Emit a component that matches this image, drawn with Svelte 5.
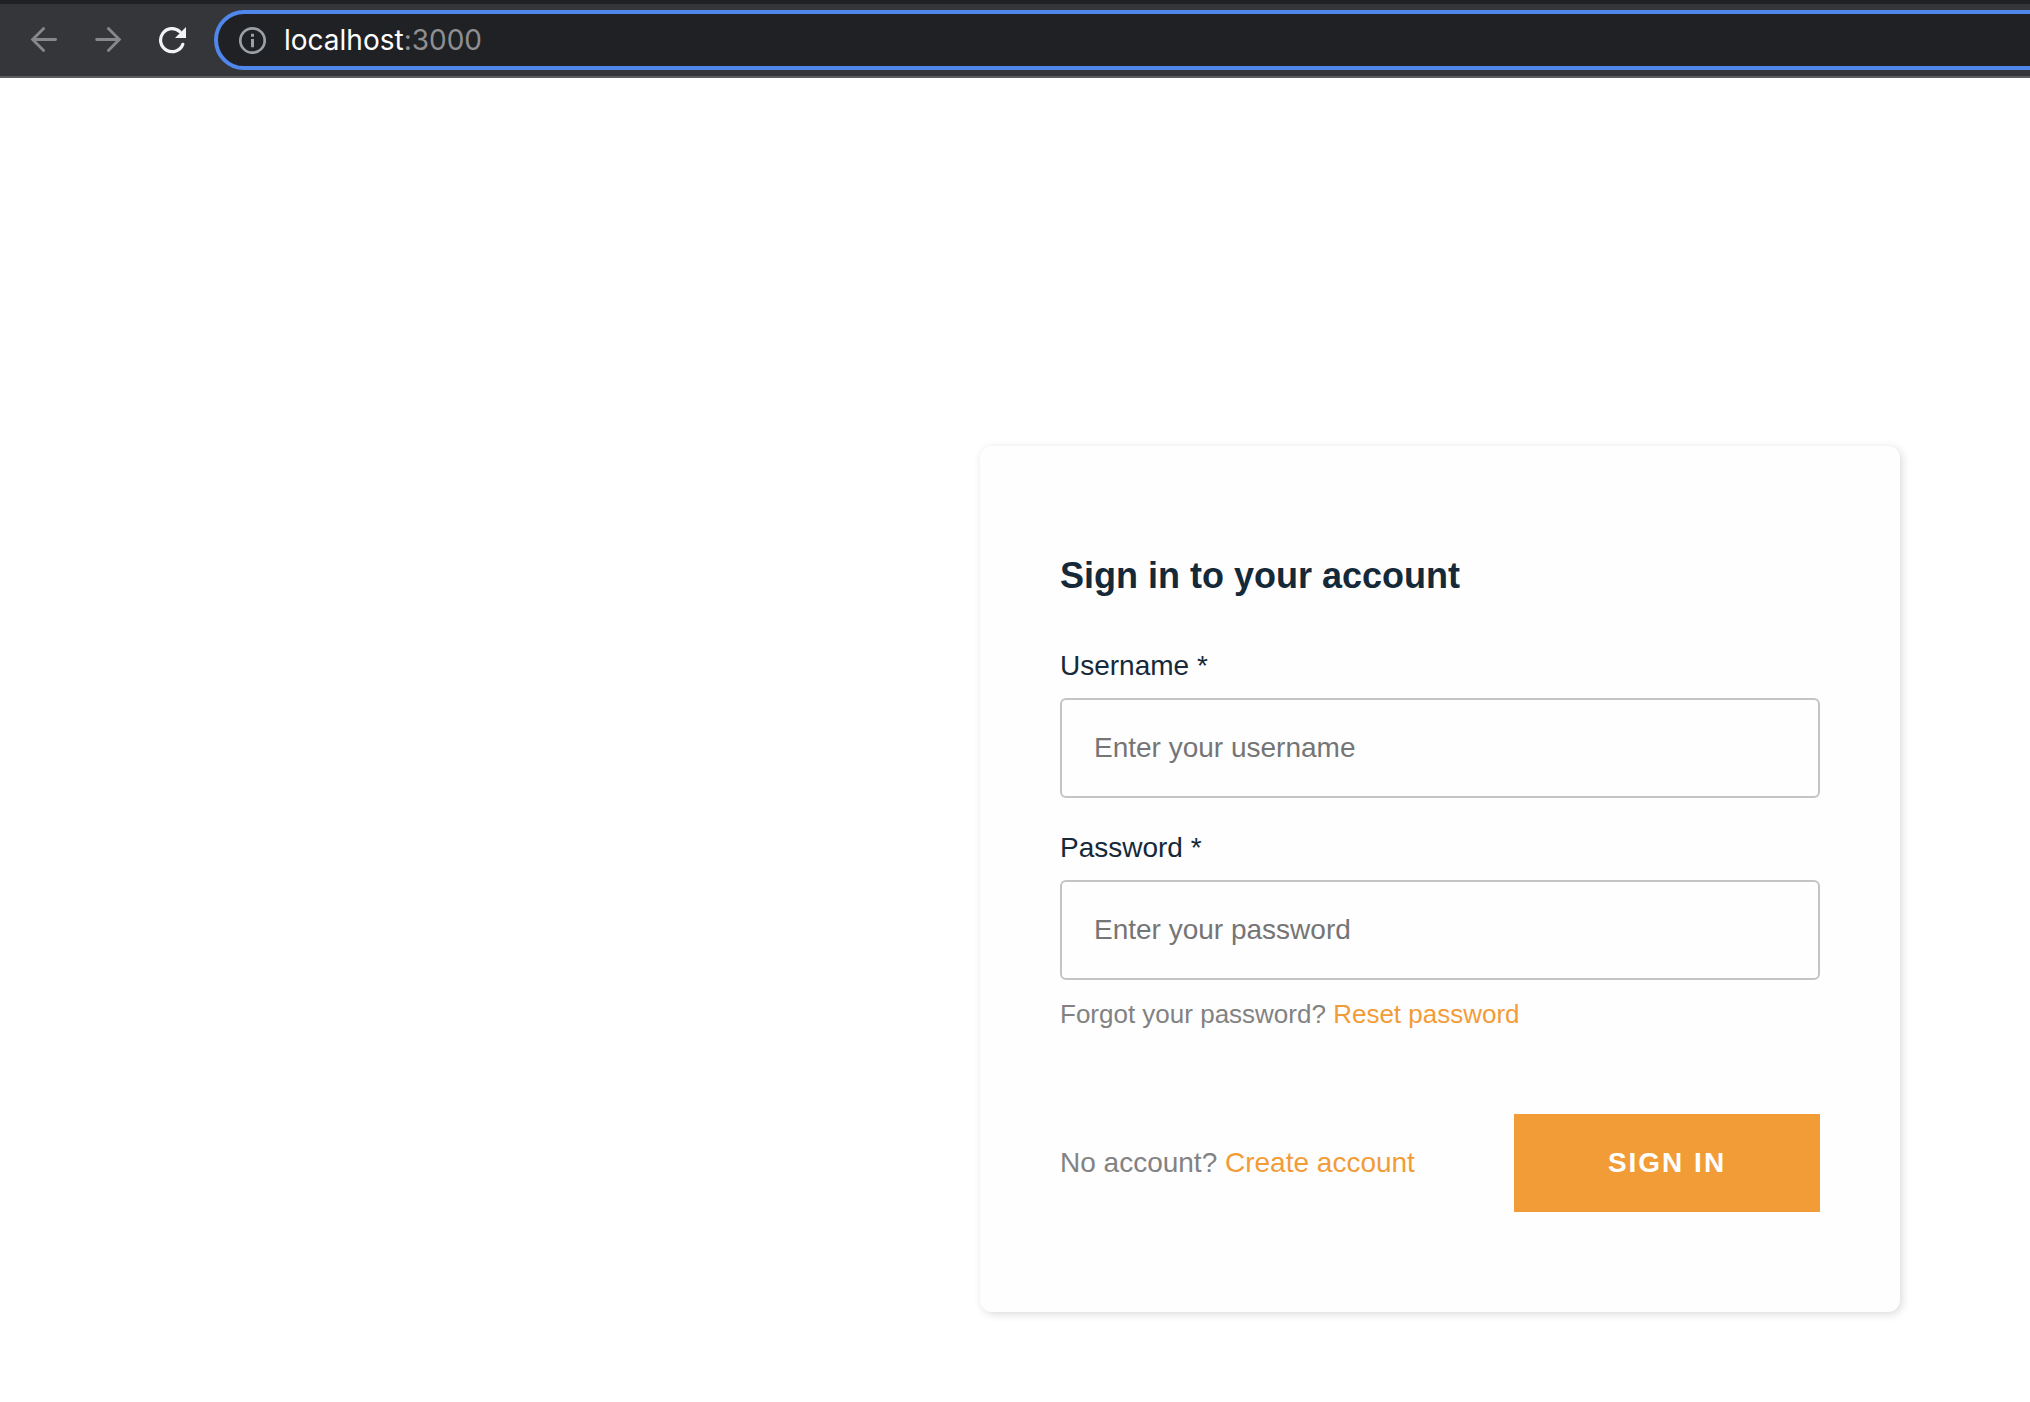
<script>
  let username = $state('');
  let password = $state('');
</script>

<div class="page">
  <header class="toolbar">
    <nav class="nav" aria-label="Browser navigation">
      <button class="nav-button" type="button" aria-label="Back" disabled>
        <svg viewBox="0 0 28 28" width="28" height="28" fill="none" stroke="currentColor" stroke-width="2.8" stroke-linecap="round">
          <path d="M25.6 13.5H3M13.6 2.4L2.6 13.5l11 11.1" />
        </svg>
      </button>
      <button class="nav-button" type="button" aria-label="Forward" disabled>
        <svg viewBox="0 0 28 28" width="28" height="28" fill="none" stroke="currentColor" stroke-width="2.8" stroke-linecap="round">
          <path d="M2.6 13.5H25M14.4 2.4l11 11.1-11 11.1" />
        </svg>
      </button>
      <button class="nav-button reload" type="button" aria-label="Reload">
        <svg viewBox="0 0 28 28" width="28" height="28">
          <path d="M24.8 18.3A11.5 11.5 0 1 1 22 5.8" fill="none" stroke="currentColor" stroke-width="3.2" stroke-linecap="round" />
          <path d="M28 1V12H17Z" fill="currentColor" />
        </svg>
      </button>
    </nav>
    <div class="address">
      <svg class="info" viewBox="0 0 28 28" width="28" height="28" aria-hidden="true">
        <circle cx="14.5" cy="14.5" r="12.2" fill="none" stroke="currentColor" stroke-width="2.7" />
        <path d="M13 13h3v8.2h-3zM13 7.8h3v3h-3z" fill="currentColor" />
      </svg>
      <div class="url" role="textbox" tabindex="0" aria-label="Address" contenteditable="true" spellcheck="false">localhost<span class="port">:3000</span></div>
    </div>
  </header>

  <main class="content">
    <form class="card" onsubmit={(e) => e.preventDefault()}>
      <h1>Sign in to your account</h1>

      <div class="field">
        <label for="username">Username *</label>
        <input id="username" type="text" placeholder="Enter your username" bind:value={username} />
      </div>

      <div class="field">
        <label for="password">Password *</label>
        <input id="password" type="password" placeholder="Enter your password" bind:value={password} />
        <p class="hint">Forgot your password? <a href="#reset">Reset password</a></p>
      </div>

      <div class="actions">
        <p>No account? <a href="#create">Create account</a></p>
        <button class="submit" type="submit">SIGN IN</button>
      </div>
    </form>
  </main>
</div>

<style>
  :global(body) {
    margin: 0;
    background: #fff;
  }

  .page {
    min-height: 100vh;
    overflow-x: hidden;
    font-family: "Liberation Sans", Arial, sans-serif;
    font-size: 28px;
    line-height: 32px;
    color: #152939;
  }

  .toolbar {
    display: flex;
    align-items: center;
    gap: 28px;
    box-sizing: border-box;
    height: 78px;
    padding-left: 30px;
    border-top: 4px solid #202124;
    border-bottom: 2px solid #5e5e62;
    background: #35363a;
  }

  .nav {
    display: flex;
    gap: 36px;
  }

  .nav-button {
    display: flex;
    padding: 0;
    border: 0;
    background: none;
    color: #87888a;
  }

  .reload {
    color: #f1f3f4;
  }

  /* The address bar runs on past the right edge of the window. */
  .address {
    flex: 1;
    display: flex;
    align-items: center;
    gap: 18px;
    box-sizing: border-box;
    height: 60px;
    margin-right: -40px;
    padding: 0 20px;
    border: 4px solid #4f87ed;
    border-radius: 30px;
    background: #202124;
  }

  .info {
    flex: none;
    color: #9aa0a6;
  }

  .url {
    flex: 1;
    outline: none;
    font-family: Inter, Roboto, sans-serif;
    color: #fff;
  }

  .port {
    color: #8e8f91;
  }

  .content {
    display: flex;
    justify-content: flex-end;
    padding: 368px 130px 88px;
  }

  .card {
    box-sizing: border-box;
    width: 920px;
    padding: 108px 80px 100px;
    border-radius: 12px;
    background: #fefefe;
    box-shadow: 2px 2px 8px 0 rgba(0, 0, 0, 0.15);
  }

  h1 {
    margin: 0 0 52px;
    font-size: 36px;
    line-height: 44px;
    font-weight: 700;
  }

  .field {
    display: flex;
    flex-direction: column;
    margin-bottom: 34px;
  }

  label {
    margin-bottom: 16px;
  }

  input {
    box-sizing: border-box;
    width: 100%;
    height: 100px;
    padding: 0 32px;
    border: 2px solid #c4c4c4;
    border-radius: 6px;
    background: #fefefe;
    font: inherit;
    color: #152939;
  }

  input::placeholder {
    color: #757575;
    opacity: 1;
  }

  p {
    margin: 0;
    color: #828282;
  }

  a {
    color: #f29c38;
    text-decoration: none;
  }

  .hint {
    margin-top: 18px;
    font-size: 26px;
  }

  .actions {
    display: flex;
    justify-content: space-between;
    align-items: center;
    margin-top: 84px;
  }

  .submit {
    width: 306px;
    height: 98px;
    padding: 0;
    border: 0;
    background: #f29c38;
    color: #fff;
    font: inherit;
    font-weight: 700;
    letter-spacing: 2px;
  }
</style>
